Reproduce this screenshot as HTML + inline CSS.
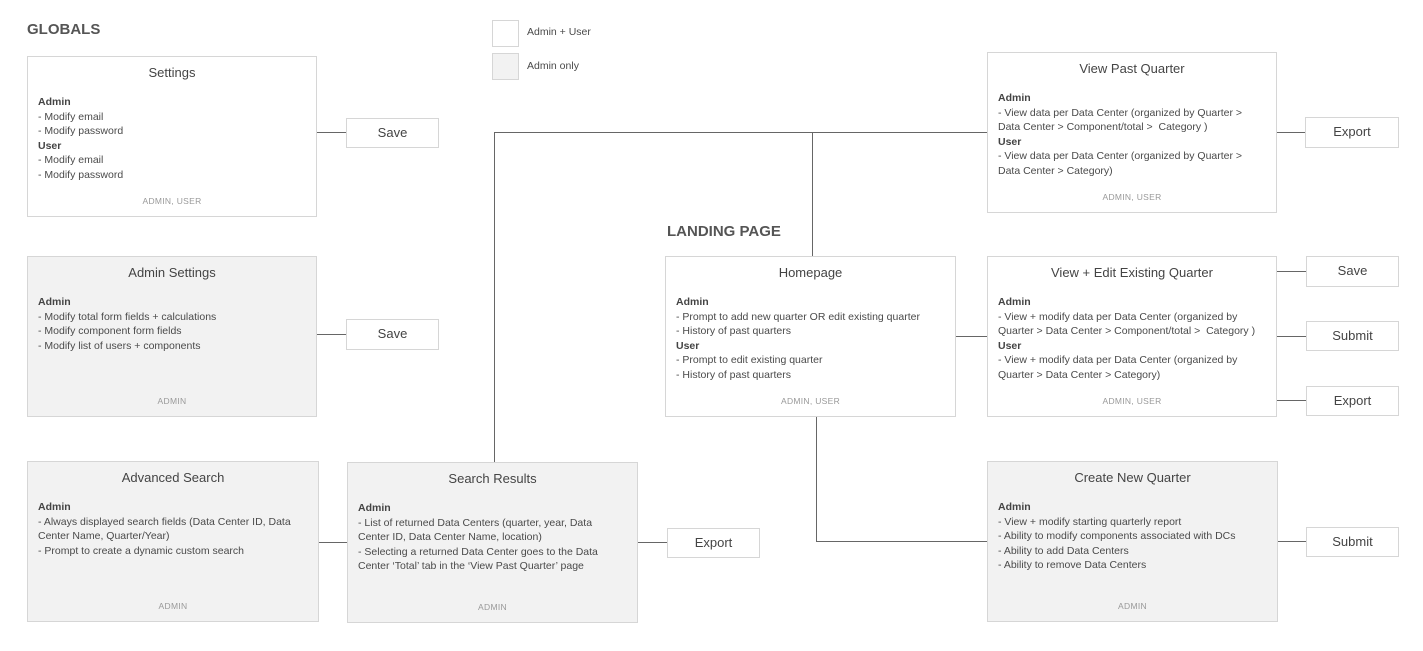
<!DOCTYPE html>
<html><head><style>
body{margin:0;width:1423px;height:651px;background:#fff;position:relative;overflow:hidden;font-family:"Liberation Sans",sans-serif;color:#4a4a4a}
.b{position:absolute;box-sizing:border-box;border:1.5px solid #d6d6d6;background:#fff}
.g{background:#f2f2f2}
.t{position:absolute;left:0;right:0;top:8px;text-align:center;font-size:13px;color:#444}
.c{position:absolute;left:10px;top:38px;font-size:10.5px;line-height:14.5px;color:#4a4a4a;white-space:nowrap}
.c b{font-weight:bold;color:#444}
.f{position:absolute;left:0;right:0;bottom:10px;text-align:center;font-size:8.5px;color:#999;letter-spacing:.3px}
.btn{position:absolute;box-sizing:border-box;border:1.5px solid #d6d6d6;background:#fff;font-size:13px;text-align:center;color:#444}
.h{position:absolute;height:1px;background:#666}
.v{position:absolute;width:1px;background:#666}
.hd{position:absolute;font-size:15px;font-weight:bold;color:#555}
</style></head><body>
<div class="hd" style="left:27px;top:21px">GLOBALS</div>
<div class="hd" style="left:667px;top:223px">LANDING PAGE</div>
<div class="b" style="left:492px;top:20px;width:27px;height:27px"></div>
<div class="b g" style="left:492px;top:53px;width:27px;height:27px"></div>
<div style="position:absolute;left:527px;top:26px;font-size:10.5px">Admin + User</div>
<div style="position:absolute;left:527px;top:60px;font-size:10.5px">Admin only</div>

<!-- lines -->
<div class="h" style="left:316px;top:132px;width:30px"></div>
<div class="h" style="left:316px;top:334px;width:30px"></div>
<div class="h" style="left:318px;top:542px;width:29px"></div>
<div class="h" style="left:637px;top:542px;width:30px"></div>
<div class="v" style="left:494px;top:132px;height:330px"></div>
<div class="h" style="left:494px;top:132px;width:493px"></div>
<div class="v" style="left:812px;top:132px;height:124px"></div>
<div class="h" style="left:955px;top:336px;width:32px"></div>
<div class="v" style="left:816px;top:416px;height:125px"></div>
<div class="h" style="left:816px;top:541px;width:171px"></div>
<div class="h" style="left:1276px;top:132px;width:29px"></div>
<div class="h" style="left:1276px;top:271px;width:30px"></div>
<div class="h" style="left:1276px;top:336px;width:30px"></div>
<div class="h" style="left:1276px;top:400px;width:30px"></div>
<div class="h" style="left:1277px;top:541px;width:29px"></div>

<div class="b" style="left:27px;top:56px;width:290px;height:161px"><div class="t">Settings</div><div class="c"><b>Admin</b><br>- Modify email<br>- Modify password<br><b>User</b><br>- Modify email<br>- Modify password</div><div class="f">ADMIN, USER</div></div>
<div class="b g" style="left:27px;top:256px;width:290px;height:161px"><div class="t">Admin Settings</div><div class="c"><b>Admin</b><br>- Modify total form fields + calculations<br>- Modify component form fields<br>- Modify list of users + components</div><div class="f">ADMIN</div></div>
<div class="b g" style="left:27px;top:461px;width:292px;height:161px"><div class="t">Advanced Search</div><div class="c"><b>Admin</b><br>- Always displayed search fields (Data Center ID, Data<br>Center Name, Quarter/Year)<br>- Prompt to create a dynamic custom search</div><div class="f">ADMIN</div></div>
<div class="b g" style="left:347px;top:462px;width:291px;height:161px"><div class="t">Search Results</div><div class="c"><b>Admin</b><br>- List of returned Data Centers (quarter, year, Data<br>Center ID, Data Center Name, location)<br>- Selecting a returned Data Center goes to the Data<br>Center ‘Total’ tab in the ‘View Past Quarter’ page</div><div class="f">ADMIN</div></div>
<div class="b" style="left:665px;top:256px;width:291px;height:161px"><div class="t">Homepage</div><div class="c"><b>Admin</b><br>- Prompt to add new quarter OR edit existing quarter<br>- History of past quarters<br><b>User</b><br>- Prompt to edit existing quarter<br>- History of past quarters</div><div class="f">ADMIN, USER</div></div>
<div class="b" style="left:987px;top:52px;width:290px;height:161px"><div class="t">View Past Quarter</div><div class="c"><b>Admin</b><br>- View data per Data Center (organized by Quarter &gt;<br>Data Center &gt; Component/total &gt;&nbsp; Category )<br><b>User</b><br>- View data per Data Center (organized by Quarter &gt;<br>Data Center &gt; Category)</div><div class="f">ADMIN, USER</div></div>
<div class="b" style="left:987px;top:256px;width:290px;height:161px"><div class="t">View + Edit Existing Quarter</div><div class="c"><b>Admin</b><br>- View + modify data per Data Center (organized by<br>Quarter &gt; Data Center &gt; Component/total &gt;&nbsp; Category )<br><b>User</b><br>- View + modify data per Data Center (organized by<br>Quarter &gt; Data Center &gt; Category)</div><div class="f">ADMIN, USER</div></div>
<div class="b g" style="left:987px;top:461px;width:291px;height:161px"><div class="t">Create New Quarter</div><div class="c"><b>Admin</b><br>- View + modify starting quarterly report<br>- Ability to modify components associated with DCs<br>- Ability to add Data Centers<br>- Ability to remove Data Centers</div><div class="f">ADMIN</div></div>

<div class="btn" style="left:346px;top:118px;width:93px;height:30px;line-height:27px">Save</div>
<div class="btn g" style="left:346px;top:319px;width:93px;height:31px;line-height:28px">Save</div>
<div class="btn g" style="left:667px;top:528px;width:93px;height:30px;line-height:27px">Export</div>
<div class="btn g" style="left:1305px;top:117px;width:94px;height:31px;line-height:28px">Export</div>
<div class="btn" style="left:1306px;top:256px;width:93px;height:31px;line-height:28px">Save</div>
<div class="btn" style="left:1306px;top:321px;width:93px;height:30px;line-height:27px">Submit</div>
<div class="btn g" style="left:1306px;top:386px;width:93px;height:30px;line-height:27px">Export</div>
<div class="btn" style="left:1306px;top:527px;width:93px;height:30px;line-height:27px">Submit</div>
</body></html>
